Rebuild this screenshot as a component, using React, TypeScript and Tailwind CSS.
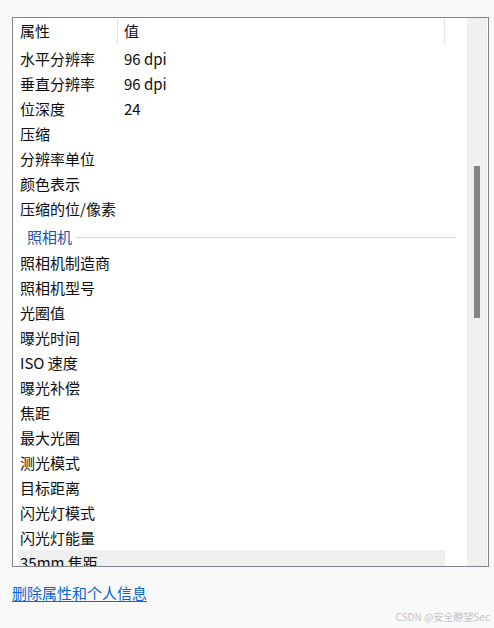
import React from "react";

const rowsA: [string, string][] = [
  ["水平分辨率", "96 dpi"],
  ["垂直分辨率", "96 dpi"],
  ["位深度", "24"],
  ["压缩", ""],
  ["分辨率单位", ""],
  ["颜色表示", ""],
  ["压缩的位/像素", ""],
];

const rowsB: string[] = [
  "照相机制造商",
  "照相机型号",
  "光圈值",
  "曝光时间",
  "ISO 速度",
  "曝光补偿",
  "焦距",
  "最大光圈",
  "测光模式",
  "目标距离",
  "闪光灯模式",
  "闪光灯能量",
];

function Row({ name, value, hl }: { name: string; value?: string; hl?: boolean }) {
  return (
    <div className={`flex h-[25px] w-[427px] shrink-0 items-center text-[15px] leading-[25px] text-[#0d0d0d] ${hl ? "bg-[#efefef]" : ""}`}>
      <div className="w-[106px] shrink-0 pl-[2px] whitespace-nowrap">{name}</div>
      <div className="whitespace-nowrap">{value}</div>
    </div>
  );
}

export default function App() {
  return (
    <div
      className="relative h-[628px] w-[494px] overflow-hidden bg-[#f9f9f9]"
      style={{ fontFamily: '"Noto Sans CJK SC", "Noto Sans", sans-serif' }}
    >
      <div className="pl-[12px] pt-[17px]">
        <div className="flex h-[550px] w-[477px] overflow-hidden border border-[#80848a] bg-white">
          <div className="flex w-[454px] shrink-0 flex-col overflow-hidden">
            <div className="flex h-[28px] shrink-0 items-start text-[15px] text-[#0d0d0d]">
              <div className="flex h-[26px] w-[104px] shrink-0 items-center pl-[7px] leading-[26px]">属性</div>
              <div className="mt-[1px] h-[25px] w-px bg-[#e3e3e3]" />
              <div className="flex h-[26px] w-[326px] shrink-0 items-center pl-[6px] leading-[26px]">值</div>
              <div className="mt-[1px] h-[25px] w-px bg-[#e3e3e3]" />
            </div>
            <div className="flex flex-col pl-[5px]">
              {rowsA.map(([n, v]) => (
                <Row key={n} name={n} value={v} />
              ))}
              <div className="flex h-[29px] w-[438px] shrink-0 items-center pl-[9px] pt-[3px]">
                <span className="text-[15px] leading-[20px] text-[#2350a8]">照相机</span>
                <div className="ml-[3px] h-px flex-1 bg-[#d3dbe8]" />
              </div>
              {rowsB.map((n) => (
                <Row key={n} name={n} />
              ))}
              <Row name="35mm 焦距" hl />
            </div>
          </div>
          <div className="w-[20px] shrink-0 bg-[#f0f0f0] pt-[148px]">
            <div className="ml-[7px] h-[152px] w-[6px] bg-[#858585]" />
          </div>
        </div>
      </div>
      <div className="pl-[12px] pt-[13px]">
        <a href="#" className="text-[15px] leading-[20px] text-[#0a66d6] underline underline-offset-2">
          删除属性和个人信息
        </a>
      </div>
      <div className="absolute bottom-[3px] right-[4px] text-[10px] leading-[16px] text-[#c3c3c3]">
        CSDN @安全瞭望Sec
      </div>
    </div>
  );
}
